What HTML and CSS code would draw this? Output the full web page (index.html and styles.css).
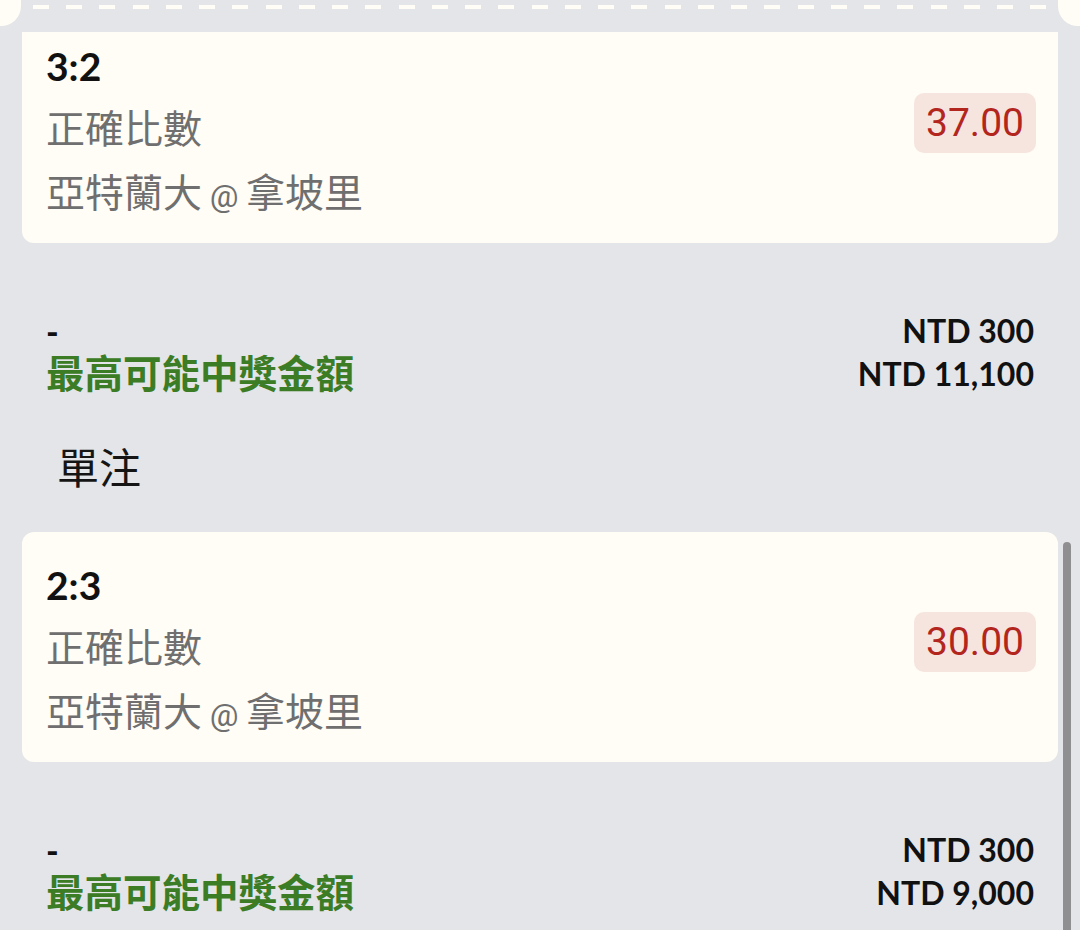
FILE: index.html
```html
<!DOCTYPE html>
<html>
	<head>
		<meta charset="utf-8" />
		<title>投注單</title>
		<link rel="stylesheet" href="styles.css">
	</head>
	<body>
		<div class="page">
			<!-- 上一張票的虛線邊 -->
			<div class="ticket-edge">
				<div class="edge-cap edge-cap-left"></div>
				<div class="edge-dash"></div>
				<div class="edge-cap edge-cap-right"></div>
			</div>

			<div class="bet-card bet-card-first">
				<div class="bet-info">
					<div class="bet-score">3:2</div>
					<div class="bet-market">正確比數</div>
					<div class="bet-match">亞特蘭大 <span class="bet-at">@</span> 拿坡里</div>
				</div>
				<div class="bet-odds">37.00</div>
			</div>
			<div class="bet-summary">
				<div class="summary-left">
					<div class="summary-dash">-</div>
					<div class="summary-label">最高可能中獎金額</div>
				</div>
				<div class="summary-right">
					<div>NTD 300</div>
					<div>NTD 11,100</div>
				</div>
			</div>

			<div class="section-title">單注</div>

			<div class="bet-card">
				<div class="bet-info">
					<div class="bet-score">2:3</div>
					<div class="bet-market">正確比數</div>
					<div class="bet-match">亞特蘭大 <span class="bet-at">@</span> 拿坡里</div>
				</div>
				<div class="bet-odds">30.00</div>
			</div>
			<div class="bet-summary">
				<div class="summary-left">
					<div class="summary-dash">-</div>
					<div class="summary-label">最高可能中獎金額</div>
				</div>
				<div class="summary-right">
					<div>NTD 300</div>
					<div>NTD 9,000</div>
				</div>
			</div>

			<div class="scrollbar"></div>
		</div>
	</body>
</html>
```
FILE: styles.css
```css
body{
	margin: 0;
	background-color: #e4e5e8;
	font-family: Lato, "Noto Sans CJK TC", sans-serif;
	color: #111;
}
.page{
	position: relative;
	height: 930px;
	overflow: hidden;
}
/* 頂部票根：兩邊半圓缺口 + 虛線 */
.ticket-edge{
	display: flex;
	height: 26px;
}
.edge-cap{
	width: 21px;
	background-color: #fffdf5;
}
.edge-cap-left{
	border-bottom-right-radius: 20px;
}
.edge-cap-right{
	width: 22px;
	border-bottom-left-radius: 20px;
}
.edge-dash{
	flex: 1;
	height: 4px;
	margin: 5px 0 0 12px;
	background: repeating-linear-gradient(to right, #fffdf5 0 16px, transparent 16px 33.25px);
}
/* 注單卡片 */
.bet-card{
	display: flex;
	justify-content: space-between;
	align-items: flex-start;
	margin: 0 22px;
	padding: 21px 22px 17px 24px;
	background-color: #fffdf5;
	border-radius: 12px;
}
.bet-card-first{
	margin-top: 6px;
	padding-top: 2px;
	border-top-left-radius: 0;
	border-top-right-radius: 0;
}
.bet-info > div{
	height: 64px;
	line-height: 64px;
}
.bet-score{
	font-size: 39px;
	font-weight: bold;
	color: #111;
}
.bet-market,
.bet-match{
	font-family: Roboto, "Noto Sans CJK TC", sans-serif;
	font-size: 39px;
	color: #6f6f6f;
}
.bet-match{
	word-spacing: -2px;
}
.bet-at{
	font-size: 32px;
}
.bet-odds{
	margin-top: 59px;
	height: 60px;
	line-height: 60px;
	padding: 0 12px;
	border-radius: 10px;
	background-color: #f6e5df;
	color: #b3261e;
	font-family: Roboto, sans-serif;
	font-size: 39px;
}
/* 金額區 */
.bet-summary{
	display: flex;
	justify-content: space-between;
	padding: 66px 46px 0 46px;
	line-height: 43px;
}
.summary-dash{
	height: 43px;
	font-size: 34px;
	font-weight: 900;
}
.summary-label{
	height: 43px;
	font-size: 38.5px;
	font-weight: bold;
	color: #3b7c25;
}
.summary-right{
	text-align: right;
	font-size: 32px;
	font-weight: bold;
}
.section-title{
	margin: 41px 0 36px 0;
	padding-left: 57px;
	height: 60px;
	line-height: 60px;
	font-family: "Noto Sans CJK TC", sans-serif;
	font-size: 42px;
	color: #151515;
}
/* 右側捲軸 */
.scrollbar{
	position: absolute;
	left: 1063px;
	top: 542px;
	width: 8px;
	height: 400px;
	border-radius: 4px;
	background-color: #8f8f91;
}
```
